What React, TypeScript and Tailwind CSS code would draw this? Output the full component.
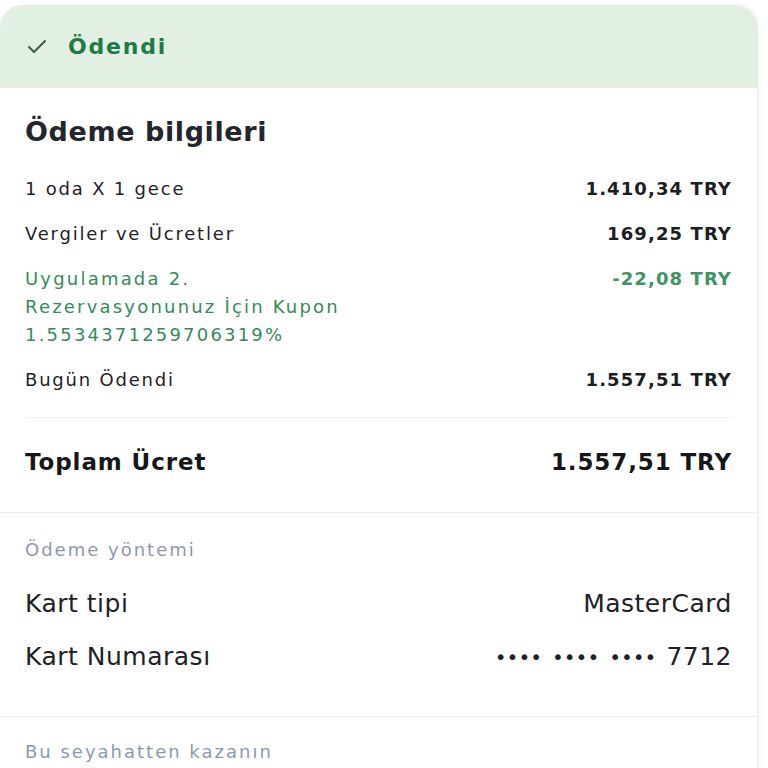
import { Check } from 'lucide-react'

function Row({ label, value, green }: { label: string; value: string; green?: boolean }) {
  return (
    <div className={`flex justify-between items-start gap-6 text-[18px] leading-[28px] ${green ? 'text-[#358a5b]' : 'text-[#1f2227]'}`}>
      <span className={green ? 'max-w-[345px] tracking-[2.2px]' : 'tracking-[1.8px]'}>{label}</span>
      <span className={`whitespace-nowrap font-bold tracking-[1.1px] ${green ? 'text-[#3d9464]' : 'text-[#1c1e22]'}`}>{value}</span>
    </div>
  )
}

function App() {
  return (
    <div className="min-h-screen bg-white pt-[5px]" style={{ fontFamily: '"DejaVu Sans", "Noto Sans", sans-serif' }}>
      <div className="w-[758px] rounded-t-[22px] border-r border-[#ececec] shadow-[2px_0_6px_rgba(0,0,0,0.04)] overflow-hidden bg-white">
        {/* status */}
        <div className="h-[83px] bg-[#e2f0e3] flex items-center gap-[19px] px-[25px]">
          <Check className="w-[24px] h-[24px] text-[#3d5c48]" strokeWidth={2} />
          <span className="text-[22px] font-bold tracking-[1.8px] text-[#1f7a45]">Ödendi</span>
        </div>

        {/* payment details */}
        <div className="px-[25px] pt-[24px]">
          <h2 className="text-[27px] font-bold tracking-[0.6px] text-[#23262d] leading-[40px]">Ödeme bilgileri</h2>
          <div className="mt-[23px] flex flex-col gap-[17px]">
            <Row label="1 oda X 1 gece" value="1.410,34 TRY" />
            <Row label="Vergiler ve Ücretler" value="169,25 TRY" />
            <Row label="Uygulamada 2. Rezervasyonunuz İçin Kupon 1.5534371259706319%" value="-22,08 TRY" green />
            <Row label="Bugün Ödendi" value="1.557,51 TRY" />
          </div>
          <div className="mt-[23px] border-t border-[#f2f2f2]" />
          <div className="flex justify-between items-center pt-[30px] pb-[36px] leading-[28px] text-[23px] font-bold tracking-[0.9px] text-[#15171a]">
            <span>Toplam Ücret</span>
            <span>1.557,51 TRY</span>
          </div>
        </div>

        <div className="border-t border-[#ececec]" />

        {/* payment method */}
        <div className="px-[25px] pt-[26px] pb-[42px]">
          <div className="text-[18px] leading-[22px] tracking-[2px] text-[#8e98ad]">Ödeme yöntemi</div>
          <div className="mt-[26px] flex flex-col gap-[19px] text-[25px] tracking-[0.5px] text-[#1e2126]">
            <div className="flex justify-between leading-[34px]">
              <span>Kart tipi</span>
              <span>MasterCard</span>
            </div>
            <div className="flex justify-between items-center leading-[34px]">
              <span>Kart Numarası</span>
              <span className="flex items-center gap-[10px]">
                <span className="text-[20px] tracking-[0px]">••••</span>
                <span className="text-[20px] tracking-[0px]">••••</span>
                <span className="text-[20px] tracking-[0px]">••••</span>
                <span>7712</span>
              </span>
            </div>
          </div>
        </div>

        <div className="border-t border-[#ececec]" />

        <div className="px-[25px] pt-[24px] pb-[30px]">
          <div className="text-[18px] leading-[22px] tracking-[2px] text-[#8e98ad]">Bu seyahatten kazanın</div>
        </div>
      </div>
    </div>
  )
}

export default App
